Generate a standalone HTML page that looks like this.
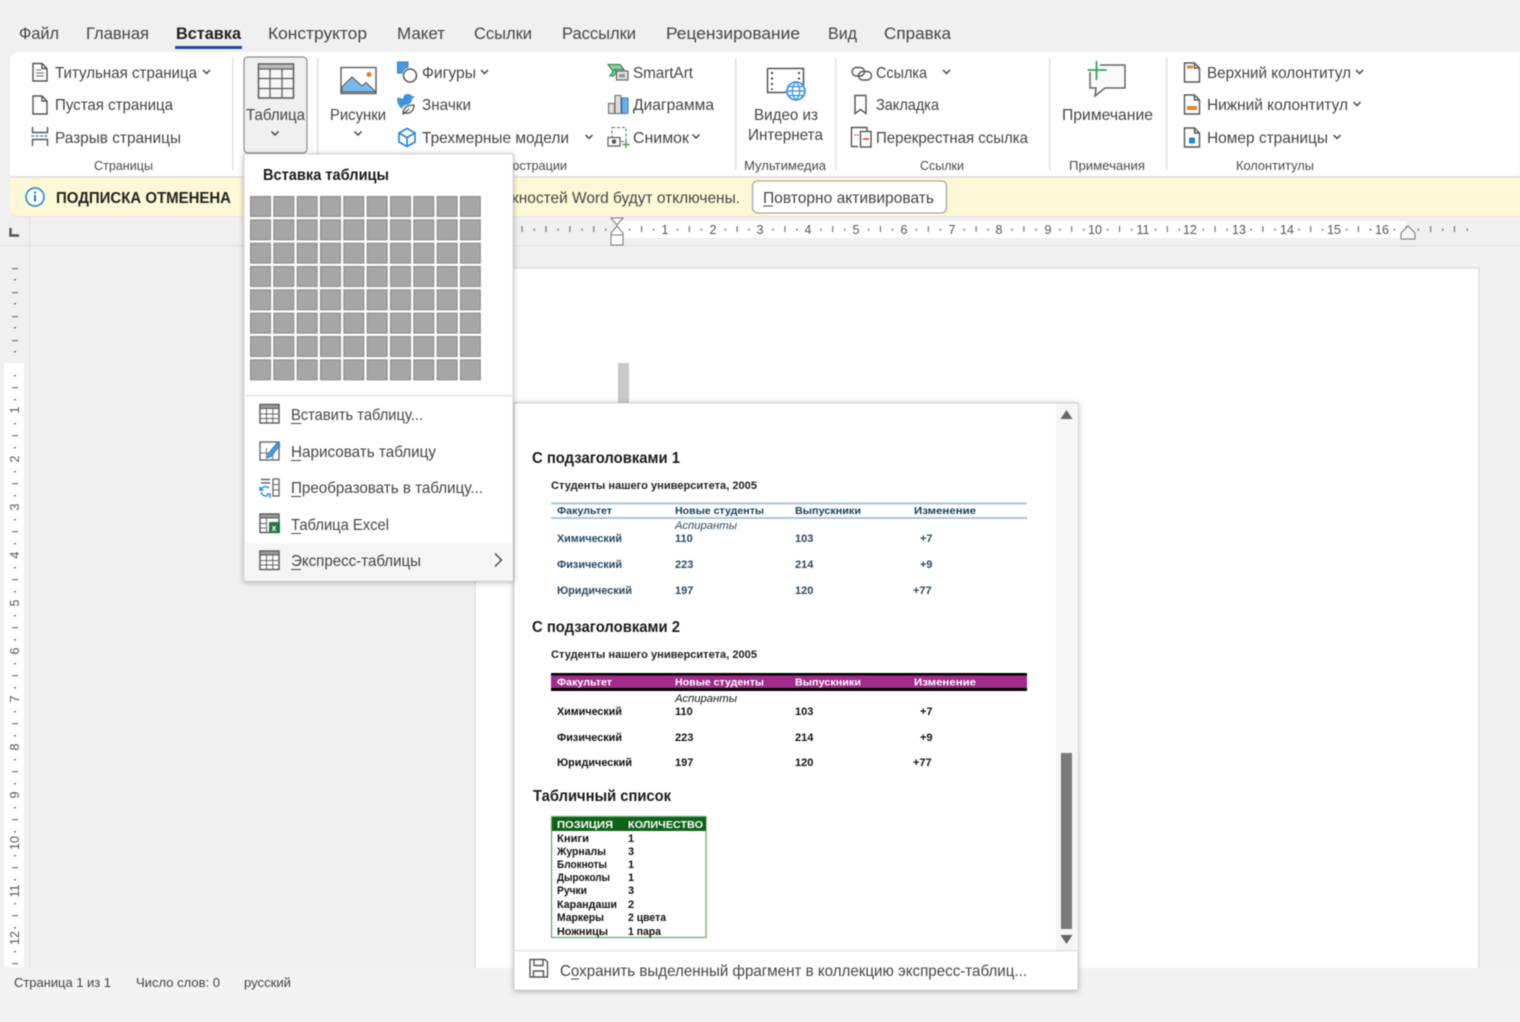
<!DOCTYPE html>
<html lang="ru"><head><meta charset="utf-8"><title>Word</title>
<style>
html,body{margin:0;padding:0;background:#f0f0f0;width:1520px;height:1022px;overflow:hidden}
svg{display:block;filter:blur(.45px)}
text{font-family:"Liberation Sans",sans-serif;fill:#444;font-size:16px}
.t{font-size:17px}
.l{font-size:13px;fill:#4a4a4a}
.m{fill:#444}
.b{font-weight:bold}
.h{font-weight:bold;font-size:16px;fill:#1a1a1a}
.s{font-size:11px;font-weight:bold;fill:#222}
.th{font-size:10.5px;font-weight:bold;fill:#173f5c}
.td{font-size:11px;fill:#2a4a60;font-weight:bold}
.tk{font-size:11px;fill:#111;font-weight:bold}
.tw{font-size:10.5px;fill:#fff;font-weight:bold}
.r{font-size:12.5px;fill:#555;text-anchor:middle}
.st{font-size:13px;fill:#444}
.i{fill:none;stroke:#555;stroke-width:1.4}
.c{fill:none;stroke:#444;stroke-width:1.5}
</style></head><body>
<svg width="1520" height="1022" viewBox="0 0 1520 1022" xmlns="http://www.w3.org/2000/svg">
<rect width="1520" height="1022" fill="#f0f0f0"/>

<!-- tabs -->
<text class="t" x="19" y="39" textLength="40" lengthAdjust="spacingAndGlyphs">Файл</text>
<text class="t" x="86" y="39" textLength="63" lengthAdjust="spacingAndGlyphs">Главная</text>
<text class="t b" x="176" y="39" textLength="65" lengthAdjust="spacingAndGlyphs" style="fill:#222">Вставка</text>
<text class="t" x="268" y="39" textLength="99" lengthAdjust="spacingAndGlyphs">Конструктор</text>
<text class="t" x="397" y="39" textLength="48" lengthAdjust="spacingAndGlyphs">Макет</text>
<text class="t" x="474" y="39" textLength="58" lengthAdjust="spacingAndGlyphs">Ссылки</text>
<text class="t" x="562" y="39" textLength="74" lengthAdjust="spacingAndGlyphs">Рассылки</text>
<text class="t" x="666" y="39" textLength="134" lengthAdjust="spacingAndGlyphs">Рецензирование</text>
<text class="t" x="828" y="39" textLength="29" lengthAdjust="spacingAndGlyphs">Вид</text>
<text class="t" x="884" y="39" textLength="67" lengthAdjust="spacingAndGlyphs">Справка</text>
<rect x="175" y="46" width="67" height="3" fill="#1b4ea3"/>

<!-- ribbon + yellow bar -->
<path d="M18 52H1520V216H18a8 8 0 0 1-8-8V60a8 8 0 0 1 8-8z" fill="#e6e6e6" transform="translate(0 1.5)"/>
<path d="M18 52H1520V177H10V60a8 8 0 0 1 8-8z" fill="#fff"/>
<path d="M10 177H1520V216H18a8 8 0 0 1-8-8z" fill="#fff8d6"/>
<rect x="10" y="176" width="1510" height="2" fill="#e3e3e0"/>
<g fill="#e1e1e1">
<rect x="232" y="58" width="1.5" height="112"/><rect x="317" y="58" width="1.5" height="112"/>
<rect x="735" y="58" width="1.5" height="112"/><rect x="835" y="58" width="1.5" height="112"/>
<rect x="1049" y="58" width="1.5" height="112"/><rect x="1166" y="58" width="1.5" height="112"/>
</g>

<!-- pages group -->
<path class="i" d="M33 63.500h9l5 5V81H33zM42 63.500V68.500h5"/><path d="M36 70h5M36 73h8M36 76h8" stroke="#888" stroke-width="1.200"/>
<text x="55" y="78" textLength="142" lengthAdjust="spacingAndGlyphs">Титульная страница</text>
<path class="c" d="M203 70l3.500 3.500 3.500-3.500"/>
<path class="i" d="M33 96h9l5 5v13H33zM42 96v5h5"/>
<text x="55" y="110" textLength="118" lengthAdjust="spacingAndGlyphs">Пустая страница</text>
<path class="i" d="M32.500 127v5.500h15V127M32.500 146v-6.500h15v6.500"/><path d="M31 136h18" stroke="#3b93d8" stroke-width="1.400" stroke-dasharray="3 1.500"/>
<text x="55" y="143" textLength="126" lengthAdjust="spacingAndGlyphs">Разрыв страницы</text>
<text class="l" x="94" y="170" textLength="59" lengthAdjust="spacingAndGlyphs">Страницы</text>

<!-- table button -->
<rect x="244" y="57" width="63" height="96" rx="4" fill="#f0f0f0" stroke="#8c8c8c" stroke-width="1.200"/>
<rect x="258.500" y="64" width="35" height="34" fill="#f7f7f7" stroke="#5a5a5a" stroke-width="1.500"/>
<rect x="258.500" y="64" width="35" height="5" fill="#bbb" stroke="#5a5a5a" stroke-width="1.200"/>
<path d="M270 69v29M282 69v29M259 78.500h34M259 88.500h34" stroke="#5a5a5a" stroke-width="1.200"/>
<text x="246" y="120" textLength="59" lengthAdjust="spacingAndGlyphs">Таблица</text>
<path class="c" d="M271.500 131.500l3.500 3.500 3.500-3.500"/>

<!-- illustrations -->
<rect x="341" y="67.500" width="35" height="26" fill="#fff" stroke="#666" stroke-width="1.500"/>
<path d="M342 92V87l10-10 10 9 4-3.500 9 8.500v1z" fill="#78b9ec" stroke="#555" stroke-width="1"/>
<circle cx="369" cy="74.500" r="2.500" fill="#e8762b"/>
<text x="330" y="120" textLength="56" lengthAdjust="spacingAndGlyphs">Рисунки</text>
<path class="c" d="M354.500 131.500l3.500 3.500 3.500-3.500"/>

<path d="M397.500 62h10.500v5a8 8 0 0 0-6 6h-4.500z" fill="#4a9be0" stroke="#2b7cc3"/>
<circle cx="410" cy="75.500" r="6.500" fill="#fff" stroke="#555" stroke-width="1.500"/>
<text x="422" y="78" textLength="54" lengthAdjust="spacingAndGlyphs">Фигуры</text>
<path class="c" d="M481 70l3.500 3.500 3.500-3.500"/>
<path d="M397 98c2-1 4 0 6 1 0-3 2-5 5-5 2 0 3 1 4 2l3 .5-3 2.500c0 3-2 5-5 6l-3 .5-2 3c-3-1-5-6-5-10.500z" fill="#3f93db"/>
<path d="M403 114c0-6 4-9 11-9 0 6-4 9-9 8zM403 114l6-5" fill="#fff" stroke="#555" stroke-width="1.300"/>
<text x="422" y="110" textLength="49" lengthAdjust="spacingAndGlyphs">Значки</text>
<path d="M407 128.500l8 4.500v9l-8 4.500-8-4.500v-9zM399 133l8 4.500 8-4.500M407 137.500v9" fill="none" stroke="#2a85cf" stroke-width="1.700"/>
<text x="422" y="143" textLength="147" lengthAdjust="spacingAndGlyphs">Трехмерные модели</text>
<path class="c" d="M585.500 135l3.500 3.500 3.500-3.500"/>
<text class="l" x="486" y="170" textLength="81" lengthAdjust="spacingAndGlyphs">Иллюстрации</text>

<path d="M608 64.500h12l4 5h-10l2.500 3-3 3.500H610l3-4.500z" fill="#8fd0a6" stroke="#2f9251" stroke-width="1.200"/>
<rect x="616.500" y="71" width="11.500" height="9" fill="#e2e2e2" stroke="#666" stroke-width="1.200"/>
<rect x="619" y="74" width="6" height="3.500" fill="#999"/>
<text x="633" y="78" textLength="60" lengthAdjust="spacingAndGlyphs">SmartArt</text>
<path d="M608.500 103.500h6v10h-6zM615 95.500h6v18h-6z" fill="#ddd" stroke="#666"/>
<rect x="622" y="98" width="6" height="15.500" fill="#6cb2ea" stroke="#2a7fc8"/>
<text x="633" y="110" textLength="81" lengthAdjust="spacingAndGlyphs">Диаграмма</text>
<rect x="612" y="127.500" width="14" height="14" fill="none" stroke="#666" stroke-dasharray="3 2"/>
<rect x="608" y="137.500" width="12" height="8.500" fill="#fff" stroke="#555" stroke-width="1.200"/>
<circle cx="614" cy="141.500" r="2.300" fill="#555"/>
<path d="M626 141v7M622.500 144.500h7" stroke="#3fa35f" stroke-width="1.400"/>
<text x="633" y="143" textLength="56" lengthAdjust="spacingAndGlyphs">Снимок</text>
<path class="c" d="M692.500 134.500l3.500 3.500 3.500-3.500"/>

<!-- media -->
<path d="M767.500 68.500h36V85M788 92.500h-20.500v-24" fill="#fff" stroke="#555" stroke-width="1.500"/>
<path d="M772 72v18M799 72v12" stroke="#333" stroke-width="1.800" stroke-dasharray="2 3.500"/>
<circle cx="796" cy="91" r="9" fill="#fff" stroke="#2d8fe0" stroke-width="1.600"/>
<path d="M787 91h18M796 82c-5 5-5 13 0 18M796 82c5 5 5 13 0 18M788.500 86.500h15M788.500 95.500h15" fill="none" stroke="#2d8fe0" stroke-width="1.200"/>
<text x="754" y="120" textLength="64" lengthAdjust="spacingAndGlyphs">Видео из</text>
<text x="748" y="140" textLength="75" lengthAdjust="spacingAndGlyphs">Интернета</text>
<text class="l" x="744" y="170" textLength="82" lengthAdjust="spacingAndGlyphs">Мультимедиа</text>

<!-- links -->
<rect x="852" y="67.500" width="12.500" height="8.500" rx="4.250" fill="none" stroke="#555" stroke-width="1.400"/>
<rect x="858.500" y="71.500" width="13" height="8.500" rx="4.250" fill="none" stroke="#555" stroke-width="1.400"/>
<text x="876" y="78" textLength="51" lengthAdjust="spacingAndGlyphs">Ссылка</text>
<path class="c" d="M943 70l3.500 3.500 3.500-3.500"/>
<path class="i" d="M855 95.500h11v18l-5.500-4-5.500 4z"/>
<text x="876" y="110" textLength="63" lengthAdjust="spacingAndGlyphs">Закладка</text>
<path class="i" d="M858 146.500h-6.500V127.500H867V131"/>
<rect x="860.500" y="131.500" width="10.500" height="15.500" fill="#fff" stroke="#555" stroke-width="1.400"/>
<path d="M863 139h6" stroke="#d8342c" stroke-width="1.500"/><path d="M854.500 135h4" stroke="#d8342c" stroke-width="1.200" stroke-dasharray="1.500 1"/>
<text x="876" y="143" textLength="152" lengthAdjust="spacingAndGlyphs">Перекрестная ссылка</text>
<text class="l" x="920" y="170" textLength="44" lengthAdjust="spacingAndGlyphs">Ссылки</text>

<!-- comment -->
<path d="M1100 65h25v23h-20l-10 8 1-8h-6V72" fill="#fafafa" stroke="#666" stroke-width="1.500"/>
<path d="M1096.500 61v19M1087.500 70h19" stroke="#3ca35b" stroke-width="1.800"/>
<text x="1062" y="120" textLength="91" lengthAdjust="spacingAndGlyphs">Примечание</text>
<text class="l" x="1069" y="170" textLength="76" lengthAdjust="spacingAndGlyphs">Примечания</text>

<!-- header/footer -->
<path class="i" d="M1184.500 63h10l5 5v14h-15zM1194.500 63v5h5"/><rect x="1187" y="65.500" width="6" height="3" fill="#e8832b"/>
<text x="1207" y="78" textLength="144" lengthAdjust="spacingAndGlyphs">Верхний колонтитул</text>
<path class="c" d="M1356 70l3.500 3.500 3.500-3.500"/>
<path class="i" d="M1184.500 95h10l5 5v14h-15zM1194.500 95v5h5"/><rect x="1187" y="106" width="10" height="4" fill="#e8832b"/>
<text x="1207" y="110" textLength="141" lengthAdjust="spacingAndGlyphs">Нижний колонтитул</text>
<path class="c" d="M1353.500 102l3.500 3.500 3.500-3.500"/>
<path class="i" d="M1184.500 128h10l5 5v14h-15zM1194.500 128v5h5"/><rect x="1189" y="137.500" width="6" height="6" fill="#2a8ad8"/>
<text x="1207" y="143" textLength="121" lengthAdjust="spacingAndGlyphs">Номер страницы</text>
<path class="c" d="M1333.500 135l3.500 3.500 3.500-3.500"/>
<text class="l" x="1236" y="170" textLength="78" lengthAdjust="spacingAndGlyphs">Колонтитулы</text>

<!-- yellow bar content -->
<circle cx="35" cy="197" r="9" fill="#fff" stroke="#2b92dc" stroke-width="1.700"/>
<rect x="34" y="195" width="2" height="6.500" fill="#2478bd"/><rect x="34" y="191.500" width="2" height="2" fill="#2478bd"/>
<text class="b" x="56" y="203" textLength="175" lengthAdjust="spacingAndGlyphs" style="fill:#222">ПОДПИСКА ОТМЕНЕНА</text>
<text x="365" y="203" textLength="375" lengthAdjust="spacingAndGlyphs">Большинство возможностей Word будут отключены.</text>
<rect x="752.500" y="181" width="194" height="32" rx="5" fill="#fff" stroke="#a8a8a8" stroke-width="1.300"/>
<text x="763" y="203" textLength="171" lengthAdjust="spacingAndGlyphs">Повторно активировать</text>
<path d="M763 206h10" stroke="#444" stroke-width="1"/>

<!-- rulers -->
<rect x="30" y="217" width="1490" height="28" fill="#f0f0f0"/>
<rect x="617" y="221" width="789" height="17" fill="#fff"/>
<rect x="0" y="245" width="1520" height="1.500" fill="#e2e2e2"/>
<rect x="29" y="216" width="1.500" height="752" fill="#e4e4e4"/>
<path d="M10.500 228v7.500H19" fill="none" stroke="#555" stroke-width="2.500"/>

<g stroke="#777" fill="none">
<path d="M521.500 229h96" stroke-width="6" stroke-dasharray="1.200 22.700"/>
<path d="M533.400 229.800h84" stroke-width="2" stroke-dasharray="1.500 22.400"/>
<path d="M628.900 229.800H1420" stroke-width="2" stroke-dasharray="1.500 22.400"/>
<path d="M640.900 229h790" stroke-width="6" stroke-dasharray="1.200 46.600"/>
<path d="M1430 229h26" stroke-width="6" stroke-dasharray="1.200 22.700"/>
<path d="M1442 229.800h28" stroke-width="2" stroke-dasharray="1.500 23"/>
</g>
<g class="rn">
<text class="r" x="665" y="234">1</text><text class="r" x="713" y="234">2</text><text class="r" x="760" y="234">3</text><text class="r" x="808" y="234">4</text><text class="r" x="856" y="234">5</text><text class="r" x="904" y="234">6</text><text class="r" x="952" y="234">7</text><text class="r" x="999" y="234">8</text><text class="r" x="1048" y="234">9</text><text class="r" x="1095" y="234">10</text><text class="r" x="1143" y="234">11</text><text class="r" x="1190" y="234">12</text><text class="r" x="1239" y="234">13</text><text class="r" x="1287" y="234">14</text><text class="r" x="1334" y="234">15</text><text class="r" x="1382" y="234">16</text>
</g>
<path d="M611 218h12l-6 7zM611 233l6-7 6 7v2h-12z" fill="#fff" stroke="#777" stroke-width="1"/><rect x="611" y="235" width="12" height="10" fill="#fff" stroke="#777"/>
<path d="M1408 226l7 7v6h-14v-6z" fill="#f5f5f5" stroke="#777"/>

<rect x="4" y="363" width="20" height="604" fill="#fff"/>
<g stroke="#777" fill="none">
<path d="M15 268v96" stroke-width="6" stroke-dasharray="1.200 22.800"/>
<path d="M15 279v84" stroke-width="2" stroke-dasharray="1.500 22.500"/>
<path d="M15 375v594" stroke-width="2" stroke-dasharray="1.500 22.500"/>
<path d="M15 387v580" stroke-width="6" stroke-dasharray="1.200 46.800"/>
</g>
<g>
<text class="r" transform="translate(19 410) rotate(-90)">1</text>
<text class="r" transform="translate(19 459) rotate(-90)">2</text>
<text class="r" transform="translate(19 507) rotate(-90)">3</text>
<text class="r" transform="translate(19 555) rotate(-90)">4</text>
<text class="r" transform="translate(19 603) rotate(-90)">5</text>
<text class="r" transform="translate(19 651) rotate(-90)">6</text>
<text class="r" transform="translate(19 699) rotate(-90)">7</text>
<text class="r" transform="translate(19 747) rotate(-90)">8</text>
<text class="r" transform="translate(19 795) rotate(-90)">9</text>
<text class="r" transform="translate(19 843) rotate(-90)">10</text>
<text class="r" transform="translate(19 891) rotate(-90)">11</text>
<text class="r" transform="translate(19 938) rotate(-90)">12</text>
</g>

<!-- document -->
<rect x="475" y="268" width="1004" height="710" fill="#fff" stroke="#d4d4d4"/>
<rect x="618" y="363" width="11" height="41" fill="#c9c9c9"/>

<!-- status bar -->
<rect x="0" y="968" width="1520" height="54" fill="#f3f3f3"/>
<text class="st" x="14" y="987" textLength="97" lengthAdjust="spacingAndGlyphs">Страница 1 из 1</text>
<text class="st" x="136" y="987" textLength="84" lengthAdjust="spacingAndGlyphs">Число слов: 0</text>
<text class="st" x="244" y="987" textLength="47" lengthAdjust="spacingAndGlyphs">русский</text>

<!-- gallery popup -->
<rect x="514" y="403" width="564" height="587" fill="#fff" stroke="#cfcfcf" style="filter:drop-shadow(0 1px 3px rgba(0,0,0,.28))"/>
<rect x="1056" y="404" width="22" height="546" fill="#f6f6f6"/>
<path d="M1066.500 410l6 9h-12z" fill="#666"/>
<rect x="1061" y="753" width="11" height="176" fill="#7a7a7a"/>
<path d="M1066.500 944l-6-9h12z" fill="#666"/>
<rect x="514" y="950" width="564" height="1.500" fill="#e3e3e3"/>

<text class="h" x="532" y="463" textLength="148" lengthAdjust="spacingAndGlyphs">С подзаголовками 1</text>
<text class="s" x="551" y="489" textLength="206" lengthAdjust="spacingAndGlyphs">Студенты нашего университета, 2005</text>
<path d="M551 503.500h476M551 518h476" stroke="#9cc0d3" stroke-width="1.800"/>
<text class="th" x="557" y="514" textLength="55" lengthAdjust="spacingAndGlyphs">Факультет</text>
<text class="th" x="675" y="514" textLength="89" lengthAdjust="spacingAndGlyphs">Новые студенты</text>
<text class="th" x="795" y="514" textLength="66" lengthAdjust="spacingAndGlyphs">Выпускники</text>
<text class="th" x="914" y="514" textLength="62" lengthAdjust="spacingAndGlyphs">Изменение</text>
<text x="675" y="529" textLength="62" lengthAdjust="spacingAndGlyphs" style="font-size:11px;font-style:italic;fill:#2a4a60">Аспиранты</text>
<text class="td" x="557" y="542" textLength="65" lengthAdjust="spacingAndGlyphs">Химический</text><text class="td" x="675" y="542">110</text><text class="td" x="795" y="542">103</text><text class="td" x="920" y="542">+7</text>
<text class="td" x="557" y="568" textLength="65" lengthAdjust="spacingAndGlyphs">Физический</text><text class="td" x="675" y="568">223</text><text class="td" x="795" y="568">214</text><text class="td" x="920" y="568">+9</text>
<text class="td" x="557" y="594" textLength="75" lengthAdjust="spacingAndGlyphs">Юридический</text><text class="td" x="675" y="594">197</text><text class="td" x="795" y="594">120</text><text class="td" x="913" y="594">+77</text>

<text class="h" x="532" y="632" textLength="148" lengthAdjust="spacingAndGlyphs">С подзаголовками 2</text>
<text class="s" x="551" y="658" textLength="206" lengthAdjust="spacingAndGlyphs">Студенты нашего университета, 2005</text>
<rect x="551" y="673" width="476" height="18" fill="#000"/><rect x="551" y="675.500" width="476" height="12.500" fill="#a12a8c"/>
<text class="tw" x="557" y="685.500" textLength="55" lengthAdjust="spacingAndGlyphs">Факультет</text>
<text class="tw" x="675" y="685.500" textLength="89" lengthAdjust="spacingAndGlyphs">Новые студенты</text>
<text class="tw" x="795" y="685.500" textLength="66" lengthAdjust="spacingAndGlyphs">Выпускники</text>
<text class="tw" x="914" y="685.500" textLength="62" lengthAdjust="spacingAndGlyphs">Изменение</text>
<text x="675" y="702" textLength="62" lengthAdjust="spacingAndGlyphs" style="font-size:11px;font-style:italic;fill:#111">Аспиранты</text>
<text class="tk" x="557" y="715" textLength="65" lengthAdjust="spacingAndGlyphs">Химический</text><text class="tk" x="675" y="715">110</text><text class="tk" x="795" y="715">103</text><text class="tk" x="920" y="715">+7</text>
<text class="tk" x="557" y="741" textLength="65" lengthAdjust="spacingAndGlyphs">Физический</text><text class="tk" x="675" y="741">223</text><text class="tk" x="795" y="741">214</text><text class="tk" x="920" y="741">+9</text>
<text class="tk" x="557" y="766" textLength="75" lengthAdjust="spacingAndGlyphs">Юридический</text><text class="tk" x="675" y="766">197</text><text class="tk" x="795" y="766">120</text><text class="tk" x="913" y="766">+77</text>

<text class="h" x="533" y="801" textLength="138" lengthAdjust="spacingAndGlyphs">Табличный список</text>
<rect x="551.500" y="816.500" width="154.500" height="121" fill="#fff" stroke="#6fab7b" stroke-width="1.300"/>
<rect x="552" y="817" width="154" height="14" fill="#0f6318"/>
<text class="tw" x="557" y="828" textLength="56" lengthAdjust="spacingAndGlyphs">ПОЗИЦИЯ</text>
<text class="tw" x="628" y="828" textLength="75" lengthAdjust="spacingAndGlyphs">КОЛИЧЕСТВО</text>
<text class="tk" x="557" y="842" textLength="32" lengthAdjust="spacingAndGlyphs">Книги</text><text class="tk" x="628" y="842">1</text>
<text class="tk" x="557" y="855" textLength="49" lengthAdjust="spacingAndGlyphs">Журналы</text><text class="tk" x="628" y="855">3</text>
<text class="tk" x="557" y="868" textLength="50" lengthAdjust="spacingAndGlyphs">Блокноты</text><text class="tk" x="628" y="868">1</text>
<text class="tk" x="557" y="881" textLength="53" lengthAdjust="spacingAndGlyphs">Дыроколы</text><text class="tk" x="628" y="881">1</text>
<text class="tk" x="557" y="894" textLength="30" lengthAdjust="spacingAndGlyphs">Ручки</text><text class="tk" x="628" y="894">3</text>
<text class="tk" x="557" y="908" textLength="60" lengthAdjust="spacingAndGlyphs">Карандаши</text><text class="tk" x="628" y="908">2</text>
<text class="tk" x="557" y="921" textLength="47" lengthAdjust="spacingAndGlyphs">Маркеры</text><text class="tk" x="628" y="921" textLength="38" lengthAdjust="spacingAndGlyphs">2 цвета</text>
<text class="tk" x="557" y="935" textLength="51" lengthAdjust="spacingAndGlyphs">Ножницы</text><text class="tk" x="628" y="935" textLength="33" lengthAdjust="spacingAndGlyphs">1 пара</text>

<path class="i" d="M530 959.500h15l2.500 2.500v15H530z"/><path class="i" d="M534 960v5.500h9V960M533.500 977v-6h10v6"/>
<text x="560" y="976" textLength="467" lengthAdjust="spacingAndGlyphs">Сохранить выделенный фрагмент в коллекцию экспресс-таблиц...</text>
<path d="M571 979h8" stroke="#444"/>

<!-- table dropdown -->
<rect x="244" y="154" width="269" height="427" fill="#fff" stroke="#d4d4d4" style="filter:drop-shadow(0 1px 3px rgba(0,0,0,.28))"/>
<text class="h" x="263" y="180" textLength="126" lengthAdjust="spacingAndGlyphs">Вставка таблицы</text>
<defs>
<pattern id="g" x="250" y="196" width="23.330" height="23.330" patternUnits="userSpaceOnUse">
<rect x=".6" y=".6" width="19.800" height="19.800" fill="#a6a6a6" stroke="#8f8f8f" stroke-width="1.200"/>
</pattern>
</defs>
<rect x="250" y="196" width="231" height="185" fill="url(#g)"/>
<rect x="245" y="395" width="267" height="1.500" fill="#e3e3e3"/>
<rect x="245" y="543" width="267" height="37" fill="#f5f5f5"/>

<g id="ti"><rect x="260" y="404.500" width="19" height="18.500" fill="#fff" stroke="#555" stroke-width="1.400"/><rect x="260" y="404.500" width="19" height="4" fill="#999" stroke="#555"/><path d="M266.500 408v15M272.800 408v15M260 414h19M260 418.500h19" stroke="#666"/></g>
<text class="m" x="291" y="420" textLength="132" lengthAdjust="spacingAndGlyphs">Вставить таблицу...</text><path d="M291 423.500h10" stroke="#444"/>

<rect x="260" y="442" width="19" height="18" fill="#fff" stroke="#666" stroke-width="1.400"/><path d="M266.500 448v12M260 453h8M272.800 454v6" stroke="#777"/>
<path d="M268 454l9-11 3 2.500-9 11-3.500 1z" fill="#4a9be0" stroke="#2a7fc8"/>
<text class="m" x="291" y="457" textLength="145" lengthAdjust="spacingAndGlyphs">Нарисовать таблицу</text><path d="M291 460.500h10" stroke="#444"/>

<path d="M261 479.500h9M261 483h9" stroke="#666" stroke-width="1.500"/><rect x="273" y="479" width="6" height="17" fill="#fff" stroke="#666" stroke-width="1.300"/><path d="M273 484.500h6M273 490h6" stroke="#666"/>
<path d="M269 488a5 5 0 0 0-8 1.500M260 486.500v3.500h3.500M261 492a5 5 0 0 0 7 3.500M270 498v-4h-3.500" fill="none" stroke="#2d8fe0" stroke-width="1.500"/>
<text class="m" x="291" y="493" textLength="192" lengthAdjust="spacingAndGlyphs">Преобразовать в таблицу...</text><path d="M291 496.500h10" stroke="#444"/>

<rect x="260" y="514" width="19" height="18.500" fill="#fff" stroke="#555" stroke-width="1.400"/><rect x="260" y="514" width="19" height="4" fill="#999" stroke="#555"/><path d="M266.500 518v15M260 523.500h7M260 528h7" stroke="#666"/>
<rect x="269" y="522" width="11" height="11" fill="#1f7a3a"/>
<text x="271.500" y="531" style="font-size:9px;font-weight:bold;fill:#fff">x</text>
<text class="m" x="291" y="530" textLength="98" lengthAdjust="spacingAndGlyphs">Таблица Excel</text><path d="M291 533.500h10" stroke="#444"/>

<rect x="260" y="551" width="19" height="18.500" fill="#fff" stroke="#555" stroke-width="1.400"/><rect x="260" y="551" width="19" height="4" fill="#999" stroke="#555"/><path d="M266.500 555v15M272.800 555v15M260 560.500h19M260 565h19" stroke="#666"/>
<text class="m" x="291" y="566" textLength="130" lengthAdjust="spacingAndGlyphs">Экспресс-таблицы</text><path d="M291 569.500h10" stroke="#444"/>
<path d="M495 553.500l6.500 6.500-6.500 6.500" fill="none" stroke="#444" stroke-width="1.400"/>
</svg>
</body></html>
